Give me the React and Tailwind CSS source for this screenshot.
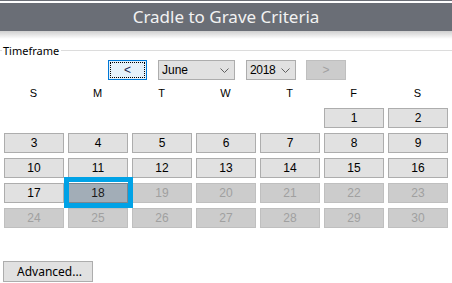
import React from "react";

const ui = { fontFamily: '"Noto Sans", "Open Sans", sans-serif' };
const tah = { fontFamily: '"Liberation Sans", Arial, sans-serif' };

function Chevron() {
  return (
    <svg width="9" height="5" viewBox="0 0 9 5" className="shrink-0">
      <polyline points="0.5,0.5 4.5,4.5 8.5,0.5" fill="none" stroke="#606060" strokeWidth="1" />
    </svg>
  );
}

const days = [];
for (let i = 0; i < 5; i++) days.push(null);
for (let d = 1; d <= 30; d++) days.push(d);

export default function App() {
  return (
    <div className="w-[452px] h-[283px] bg-white relative overflow-hidden flex flex-col">
      {/* header */}
      <div className="h-px bg-[#6b6f77]" />
      <div className="h-[2px] bg-white" />
      <div
        className="h-[28px] bg-[#6a6e76] flex items-center justify-center text-[#f2f2f2] text-[17px] leading-none"
        style={ui}
      >
        <span className="-mt-[1px]">Cradle to Grave Criteria</span>
      </div>
      <div className="h-[8px] bg-gradient-to-b from-[#cfcfcf] to-white" />

      {/* timeframe group header */}
      <div className="mt-[5px] h-[12px] flex items-center">
        <div className="w-[2px] h-px bg-[#dcdcdc]" />
        <span className="px-[1px] text-[11px] leading-none text-black" style={ui}>
          Timeframe
        </span>
        <div className="flex-1 h-px bg-[#dcdcdc] ml-[1px]" />
      </div>

      {/* nav row */}
      <div className="mt-[4px] h-[20px] flex items-stretch">
        <div className="ml-[108px] w-[39px] border border-[#0078d7] bg-[#e5f1fb] p-[1px]">
          <div className="w-full h-full border border-dotted border-black flex items-center justify-center text-[12px] text-[#1a1a4a] leading-none" style={tah}>
            &lt;
          </div>
        </div>
        <div className="ml-[11px] w-[77px] border border-[#adadad] bg-[#e1e1e1] flex items-center pl-[3px] pr-[5px] text-[12px] text-black leading-none" style={tah}>
          <span className="flex-1">June</span>
          <Chevron />
        </div>
        <div className="ml-[11px] w-[50px] border border-[#adadad] bg-[#e1e1e1] flex items-center pl-[3px] pr-[5px] text-[12px] text-black leading-none tracking-[-0.3px]" style={tah}>
          <span className="flex-1">2018</span>
          <Chevron />
        </div>
        <div className="ml-[10px] w-[40px] border border-[#bfbfbf] bg-[#cccccc] flex items-center justify-center text-[12px] text-[#a0a0a0] leading-none" style={tah}>
          &gt;
        </div>
      </div>

      {/* day headers */}
      <div className="mt-[7px] ml-[4px] w-[444px] grid grid-cols-7 gap-x-[4px] h-[12px] text-[11px] leading-[12px] text-black" style={tah}>
        {["S", "M", "T", "W", "T", "F", "S"].map((d, i) => (
          <div key={i} className="text-center -ml-[1px]">{d}</div>
        ))}
      </div>

      {/* grid */}
      <div className="mt-[9px] ml-[4px] w-[444px] grid grid-cols-7 gap-x-[4px] gap-y-[5px]" style={tah}>
        {days.map((d, i) => {
          if (d === null) return <div key={i} className="h-[20px]" />;
          if (d === 18)
            return (
              <div key={i} className="relative h-[20px] border border-[#7b868f] bg-[#a2adb7] flex items-center justify-center text-[12px] text-[#1a1a1a] leading-none">
                18
                <div className="absolute -left-[5px] -right-[6px] -top-[7px] -bottom-[6px] border-[5px] border-[#00a2e6]" />
              </div>
            );
          if (d > 18)
            return (
              <div key={i} className="h-[20px] border border-[#bfbfbf] bg-[#cccccc] flex items-center justify-center text-[12px] text-[#a0a0a0] leading-none">
                {d}
              </div>
            );
          return (
            <div key={i} className="h-[20px] border border-[#adadad] bg-[#e1e1e1] flex items-center justify-center text-[12px] text-black leading-none">
              {d}
            </div>
          );
        })}
      </div>

      {/* advanced */}
      <div className="mt-auto mb-[1px] ml-[3px] w-[90px] h-[21px] border border-[#adadad] bg-[#e1e1e1] flex items-center pl-[13px] text-[12px] text-black leading-none" style={ui}>
        Advanced...
      </div>
    </div>
  );
}
